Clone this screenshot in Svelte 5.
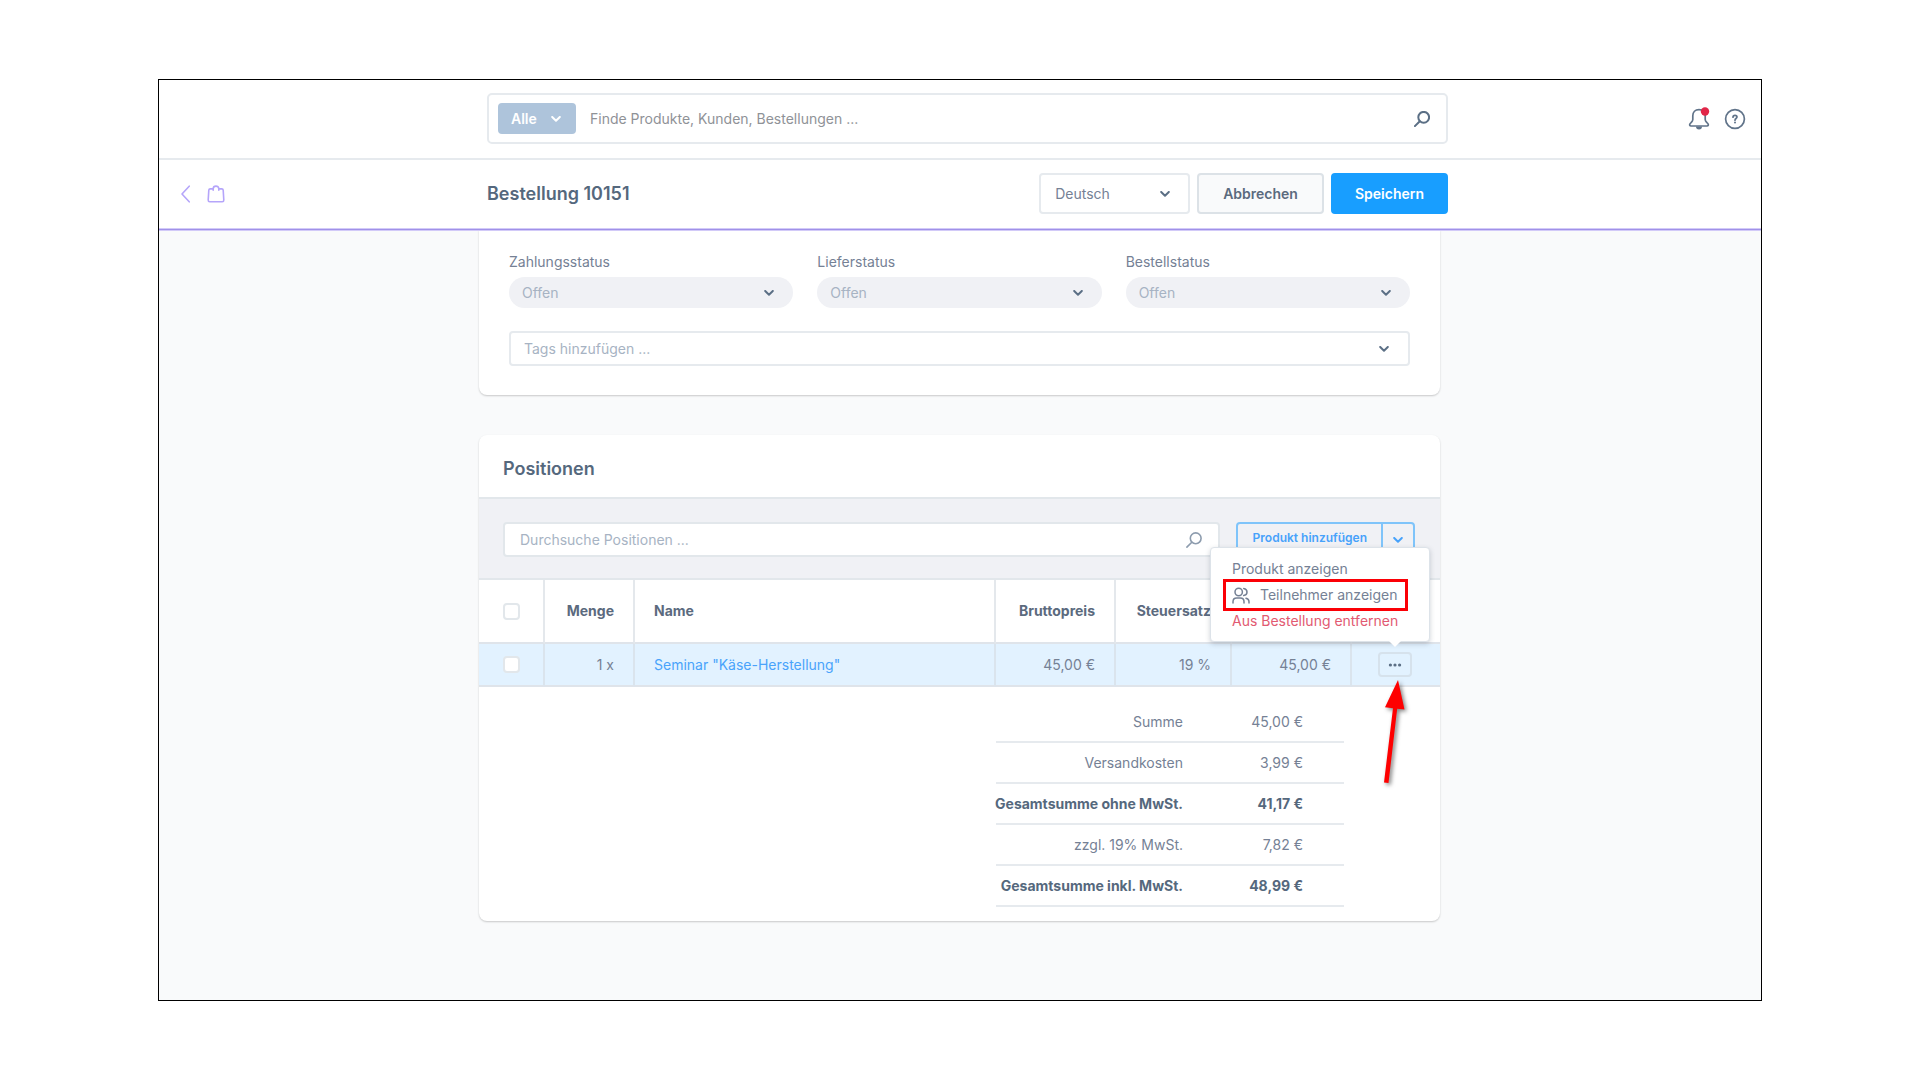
<script lang="ts">
  interface Status {
    id: string;
    label: string;
    value: string;
  }

  interface SummaryRow {
    label: string;
    value: string;
    strong?: boolean;
  }

  const statuses: Status[] = [
    { id: 'payment', label: 'Zahlungsstatus', value: 'Offen' },
    { id: 'delivery', label: 'Lieferstatus', value: 'Offen' },
    { id: 'order', label: 'Bestellstatus', value: 'Offen' },
  ];

  const summary: SummaryRow[] = [
    { label: 'Summe', value: '45,00 €' },
    { label: 'Versandkosten', value: '3,99 €' },
    { label: 'Gesamtsumme ohne MwSt.', value: '41,17 €', strong: true },
    { label: 'zzgl. 19% MwSt.', value: '7,82 €' },
    { label: 'Gesamtsumme inkl. MwSt.', value: '48,99 €', strong: true },
  ];

  let menuOpen = $state(true);
</script>

{#snippet chevron()}
  <svg class="chevron" width="10" height="6" viewBox="0 0 10 6" aria-hidden="true">
    <path d="M1.2 1l3.8 3.7L8.8 1" />
  </svg>
{/snippet}

{#snippet magnifier()}
  <svg class="magnifier" width="16" height="16" viewBox="0 0 16 16" aria-hidden="true">
    <circle cx="9.7" cy="6.3" r="5.4" />
    <path d="M5.8 10.2L.9 15.1" />
  </svg>
{/snippet}

<div class="app">
  <header class="topbar">
    <div class="search">
      <button class="search-type" type="button">Alle {@render chevron()}</button>
      <input type="text" aria-label="Suche" placeholder="Finde Produkte, Kunden, Bestellungen ..." />
      {@render magnifier()}
    </div>
    <div class="tools">
      <button class="icon-button" type="button" aria-label="Benachrichtigungen">
        <svg width="22" height="24" viewBox="0 0 22 24">
          <path
            class="line"
            d="M11 2.6c-3.8 0-6.2 2.6-6.2 6.2v3.7c0 1.4-.5 2-1.6 3l-1 1c-1 1-.6 2.5.9 2.5h15.8c1.5 0 1.9-1.5.9-2.5l-1-1c-1.1-1-1.6-1.6-1.6-3V8.8C17.2 5.2 14.8 2.6 11 2.6z"
          />
          <path class="clapper" d="M8 19.5h6a3 3 0 0 1-6 0z" />
          <circle class="dot" cx="17" cy="4.5" r="4.2" />
        </svg>
      </button>
      <button class="icon-button" type="button" aria-label="Hilfe">
        <svg width="22" height="22" viewBox="0 0 22 22">
          <circle class="line" cx="11" cy="11" r="9.4" />
          <path class="line" d="M9 9.2c0-1.2.9-1.9 2-1.9s2 .7 2 1.8c0 1.5-2 1.4-2 3.1" />
          <circle class="clapper" cx="11" cy="14.6" r="1" />
        </svg>
      </button>
    </div>
  </header>

  <div class="headbar">
    <nav class="back">
      <a href="#orders" aria-label="Zurück">
        <svg width="9" height="18" viewBox="0 0 9 18"><path d="M8.2 1.2L1 9l7.2 7.800" /></svg>
      </a>
      <a href="#module" aria-label="Bestellungen">
        <svg width="18" height="18" viewBox="0 0 18 18">
          <path d="M6 3.9H3.2c-.9 0-1.3.4-1.4 1.3L1.200 15c0 1.200.5 1.700 1.500 1.700h12.600c1 0 1.500-.5 1.500-1.700l-.6-9.800c-.1-.9-.5-1.300-1.400-1.300H12" />
          <path d="M6.200 5.200V3.700c0-3.500 5.600-3.500 5.600 0v1.500" />
        </svg>
      </a>
    </nav>
    <div class="headbar-content">
      <h1>Bestellung 10151</h1>
      <div class="select-wrap language">
        <select aria-label="Sprache"><option>Deutsch</option></select>
        {@render chevron()}
      </div>
      <button class="button" type="button">Abbrechen</button>
      <button class="button primary" type="button">Speichern</button>
    </div>
  </div>

  <main>
    <section class="card states">
      <div class="state-grid">
        {#each statuses as status (status.id)}
          <div class="state">
            <label for={status.id}>{status.label}</label>
            <div class="select-wrap pill">
              <select id={status.id}><option>{status.value}</option></select>
              {@render chevron()}
            </div>
          </div>
        {/each}
      </div>
      <div class="select-wrap tags">
        <input type="text" aria-label="Tags" placeholder="Tags hinzufügen ..." />
        {@render chevron()}
      </div>
    </section>

    <section class="card">
      <h2>Positionen</h2>
      <div class="toolbar">
        <div class="filter">
          <input type="text" aria-label="Positionen durchsuchen" placeholder="Durchsuche Positionen ..." />
          {@render magnifier()}
        </div>
        <div class="split">
          <button type="button">Produkt hinzufügen</button>
          <button type="button" aria-label="Weitere Optionen">{@render chevron()}</button>
        </div>
      </div>

      <table class="items">
        <colgroup>
          <col class="col-check" />
          <col class="col-amount" />
          <col />
          <col class="col-number" />
          <col class="col-tax" />
          <col class="col-number" />
          <col class="col-actions" />
        </colgroup>
        <thead>
          <tr>
            <th class="check"><input type="checkbox" aria-label="Alle auswählen" /></th>
            <th class="right">Menge</th>
            <th>Name</th>
            <th class="right">Bruttopreis</th>
            <th class="right">Steuersatz</th>
            <th></th>
            <th></th>
          </tr>
        </thead>
        <tbody>
          <tr>
            <td class="check"><input type="checkbox" aria-label="Position auswählen" /></td>
            <td class="right">1 x</td>
            <td><a href="#product">Seminar "Käse-Herstellung"</a></td>
            <td class="right">45,00 €</td>
            <td class="right">19 %</td>
            <td class="right">45,00 €</td>
            <td class="actions">
              <div class="action-anchor">
                <button class="more" type="button" aria-label="Aktionen" onclick={() => (menuOpen = !menuOpen)}>
                  <svg width="14" height="4" viewBox="0 0 14 4">
                    <circle cx="2.4" cy="2" r="1.6" />
                    <circle cx="7" cy="2" r="1.6" />
                    <circle cx="11.6" cy="2" r="1.6" />
                  </svg>
                </button>
                {#if menuOpen}
                  <div class="menu">
                    <button type="button">Produkt anzeigen</button>
                    <button class="marked" type="button">
                      <svg width="18" height="17" viewBox="0 0 18 17" aria-hidden="true">
                        <circle cx="6.7" cy="5" r="3.7" />
                        <path d="M1 16v-1.200c0-2.300 1.500-3.700 3.700-3.700h3.600c2.200 0 3.700 1.400 3.700 3.700V16M11.700 1.400c4.400.8 4.400 6.400 0 7.200M14 11.300c2 .4 3 1.700 3 3.500V16" />
                      </svg>
                      Teilnehmer anzeigen
                    </button>
                    <button class="danger" type="button">Aus Bestellung entfernen</button>
                  </div>
                {/if}
                <svg class="arrow" width="30" height="112" viewBox="0 0 30 112" aria-hidden="true">
                  <path d="M16 1l6.500 29.500-7.300-.8L6.500 104l-4.500-.5 9-74.300-8-.9z" />
                </svg>
              </div>
            </td>
          </tr>
        </tbody>
      </table>

      <dl class="summary">
        {#each summary as row (row.label)}
          <div class="summary-row" class:strong={row.strong}>
            <dt>{row.label}</dt>
            <dd>{row.value}</dd>
          </div>
        {/each}
      </dl>
    </section>
  </main>
</div>

<style>
  :global(body) {
    background: #fff;
  }

  .app {
    margin: 79px 158px;
    border: 1px solid #000;
    background: #f9fafb;
    color: #758195;
    font-family: Inter, 'Liberation Sans', sans-serif;
    font-size: 14px;
    line-height: 20px;
  }

  .app * {
    box-sizing: border-box;
  }

  button,
  input,
  select {
    margin: 0;
    padding: 0;
    border: 0;
    background: none;
    color: inherit;
    font: inherit;
  }

  button {
    cursor: pointer;
  }

  a {
    color: #49a3fb;
    text-decoration: none;
  }

  svg {
    display: block;
    fill: none;
    stroke-linecap: round;
    stroke-linejoin: round;
  }

  .chevron {
    stroke: #5b6f85;
    stroke-width: 2;
  }

  .magnifier {
    stroke: #5b6f85;
    stroke-width: 2;
  }

  /* header */
  .topbar,
  .headbar {
    display: grid;
    grid-template-columns: 1fr minmax(0, 961px) 1fr;
    align-items: center;
    padding-left: 15px;
    background: #fff;
  }

  .topbar {
    height: 80px;
    padding-bottom: 1px;
    border-bottom: 2px solid #e6eaee;
  }

  .search {
    grid-column: 2;
    display: flex;
    align-items: center;
    gap: 14px;
    height: 51px;
    padding: 0 16px 0 9px;
    border: 2px solid #e6eaee;
    border-radius: 5px;
  }

  .search-type {
    display: flex;
    align-items: center;
    justify-content: space-between;
    width: 78px;
    height: 31px;
    padding: 0 15px 0 13px;
    border-radius: 4px;
    background: #aec4db;
    color: #fff;
    font-weight: 600;
  }

  .search-type .chevron {
    stroke: #fff;
  }

  .search input {
    flex: 1;
    min-width: 0;
  }

  .search input::placeholder {
    color: #8f9297;
  }

  .tools {
    display: flex;
    align-items: center;
    justify-content: flex-end;
    gap: 14px;
    padding-right: 15px;
  }

  .icon-button .line {
    stroke: #607389;
    stroke-width: 1.7;
  }

  .icon-button .clapper {
    fill: #607389;
  }

  .icon-button .dot {
    fill: #e12648;
  }

  .headbar {
    position: relative;
    height: 70px;
    padding-bottom: 2px;
    border-bottom: 1px solid #a091e8;
    box-shadow: inset 0 -1px #d2caf8, 0 1px #d2caf8;
  }

  .back {
    display: flex;
    gap: 17px;
    padding-left: 7px;
  }

  .back svg {
    stroke: #b5a5fa;
    stroke-width: 1.6;
  }

  .headbar-content {
    display: flex;
    align-items: center;
    gap: 7px;
  }

  h1,
  h2 {
    margin: 0;
    color: #55687d;
    font-size: 18px;
    font-weight: 600;
    line-height: 24px;
  }

  h1 {
    flex: 1;
  }

  .button {
    height: 41px;
    padding: 0 24px;
    border: 2px solid #dce2e7;
    border-radius: 4px;
    background: #f9fafb;
    color: #5b6a7e;
    font-weight: 600;
  }

  .button.primary {
    padding: 0 22px;
    border-color: #189eff;
    background: #189eff;
    color: #fff;
  }

  .select-wrap {
    display: grid;
    align-items: center;
  }

  .select-wrap > :global(*) {
    grid-area: 1 / 1;
  }

  .select-wrap select,
  .select-wrap input {
    width: 100%;
    height: 100%;
    appearance: none;
  }

  .select-wrap .chevron {
    justify-self: end;
    pointer-events: none;
  }

  .language {
    width: 151px;
    height: 41px;
    border: 2px solid #e6eaee;
    border-radius: 4px;
  }

  .language select {
    padding-left: 14px;
  }

  .language .chevron {
    margin-right: 18px;
  }

  /* content */
  main {
    display: grid;
    grid-template-columns: 1fr minmax(0, 961px) 1fr;
    row-gap: 40px;
    padding: 0 1px 79px 0;
  }

  .card {
    grid-column: 2;
    border-radius: 8px;
    background: #fff;
    box-shadow: 0 1px 2px rgba(0, 0, 0, 0.2);
  }

  .states {
    padding: 22px 30px 29px;
    border-radius: 0 0 8px 8px;
  }

  .state-grid {
    display: grid;
    grid-template-columns: repeat(3, 1fr);
    gap: 24px;
  }

  .state label {
    display: block;
    margin-bottom: 5px;
  }

  .pill {
    height: 31px;
    border-radius: 16px;
    background: #f0f1f5;
    color: #a7b3c3;
  }

  .pill select {
    padding-left: 13px;
  }

  .pill .chevron {
    margin-right: 19px;
  }

  .tags {
    height: 35px;
    margin-top: 23px;
    border: 2px solid #e6eaee;
    border-radius: 4px;
  }

  .tags input {
    padding-left: 13px;
  }

  .tags .chevron {
    margin-right: 19px;
  }

  .tags input::placeholder,
  .filter input::placeholder {
    color: #a7b3c3;
  }

  h2 {
    padding: 22px 24px 16px;
  }

  .toolbar {
    display: flex;
    gap: 16px;
    padding: 23px 25px 21px 24px;
    border-top: 2px solid #e2e7eb;
    border-bottom: 2px solid #e2e7eb;
    background: #f0f1f5;
  }

  .filter {
    display: flex;
    flex: 1;
    align-items: center;
    height: 35px;
    padding: 0 16px 0 15px;
    border: 2px solid #e2e7eb;
    border-radius: 4px;
    background: #fff;
  }

  .filter input {
    flex: 1;
    min-width: 0;
  }

  .filter .magnifier {
    stroke: #8d9cae;
    stroke-width: 1.6;
  }

  .split {
    display: flex;
    height: 35px;
    border: 2px solid #7fc4fa;
    border-radius: 4px;
    color: #47a2fb;
    font-size: 12px;
    font-weight: 600;
  }

  .split button {
    padding: 0 14px 3px 15px;
  }

  .split button + button {
    padding: 0 10px;
    border-left: 2px solid #7fc4fa;
  }

  .split .chevron {
    stroke: #47a2fb;
  }

  .items {
    width: 100%;
    border-collapse: separate;
    border-spacing: 0;
    table-layout: fixed;
  }

  .col-check {
    width: 66px;
  }

  .col-amount {
    width: 90px;
  }

  .col-number {
    width: 120px;
  }

  .col-tax {
    width: 116px;
  }

  .col-actions {
    width: 88px;
  }

  th,
  td {
    height: 43px;
    padding: 0 19px;
    border-right: 2px solid #dae4ed;
    border-bottom: 2px solid #dfe4ea;
    text-align: left;
    white-space: nowrap;
  }

  th {
    height: 64px;
    border-right-color: #e4e8ec;
    color: #5b6a7e;
    font-weight: 700;
  }

  th:last-child,
  td:last-child {
    border-right: 0;
  }

  td {
    background: #e2f2ff;
  }

  .right {
    text-align: right;
  }

  .check {
    padding: 0 0 0 24px;
  }

  .check input {
    display: block;
    width: 17px;
    height: 17px;
    border: 2px solid #e2e7eb;
    border-radius: 4px;
    background: #fff;
    appearance: none;
  }

  .actions {
    padding: 0 26px;
  }

  .action-anchor {
    position: relative;
  }

  .more {
    display: flex;
    align-items: center;
    justify-content: center;
    width: 34px;
    height: 25px;
    border: 2px solid #d6e2ec;
    border-radius: 4px;
  }

  .more circle {
    fill: #5b6f85;
  }

  .menu {
    position: absolute;
    right: -16px;
    bottom: 35px;
    z-index: 2;
    width: 220px;
    padding: 8px 0 7px;
    border: 1px solid #dde3e9;
    border-radius: 4px;
    background: #fff;
    box-shadow: 0 2px 5px rgba(60, 75, 95, 0.25);
  }

  .menu::after {
    content: '';
    position: absolute;
    right: 28px;
    bottom: -6px;
    border: 6px solid transparent;
    border-top-color: #fff;
    border-bottom: 0;
  }

  .menu button {
    display: flex;
    align-items: center;
    gap: 10px;
    width: 100%;
    height: 26px;
    padding-left: 21px;
  }

  .menu svg {
    stroke: #758195;
    stroke-width: 1.5;
  }

  .menu .marked {
    position: relative;
  }

  .menu .marked::before {
    content: '';
    position: absolute;
    inset: -3px 21px -3px 12px;
    border: 3px solid #fb0006;
  }

  .menu .danger {
    color: #e25a72;
  }

  .arrow {
    position: absolute;
    top: 27px;
    left: 4px;
    overflow: visible;
    filter: drop-shadow(2px 2px 2px rgba(0, 0, 0, 0.5));
  }

  .arrow path {
    fill: #fe0000;
  }

  .summary {
    width: 348px;
    margin: 0 96px 0 auto;
    padding: 15px 0 14px;
  }

  .summary-row {
    display: grid;
    grid-template-columns: 187px 120px;
    align-items: center;
    height: 41px;
    border-bottom: 2px solid #e6eaee;
    text-align: right;
    white-space: nowrap;
  }

  .summary-row dt {
    justify-self: end;
  }

  .summary-row dd {
    margin: 0;
  }

  .strong {
    color: #55687d;
    font-weight: 700;
  }
</style>
